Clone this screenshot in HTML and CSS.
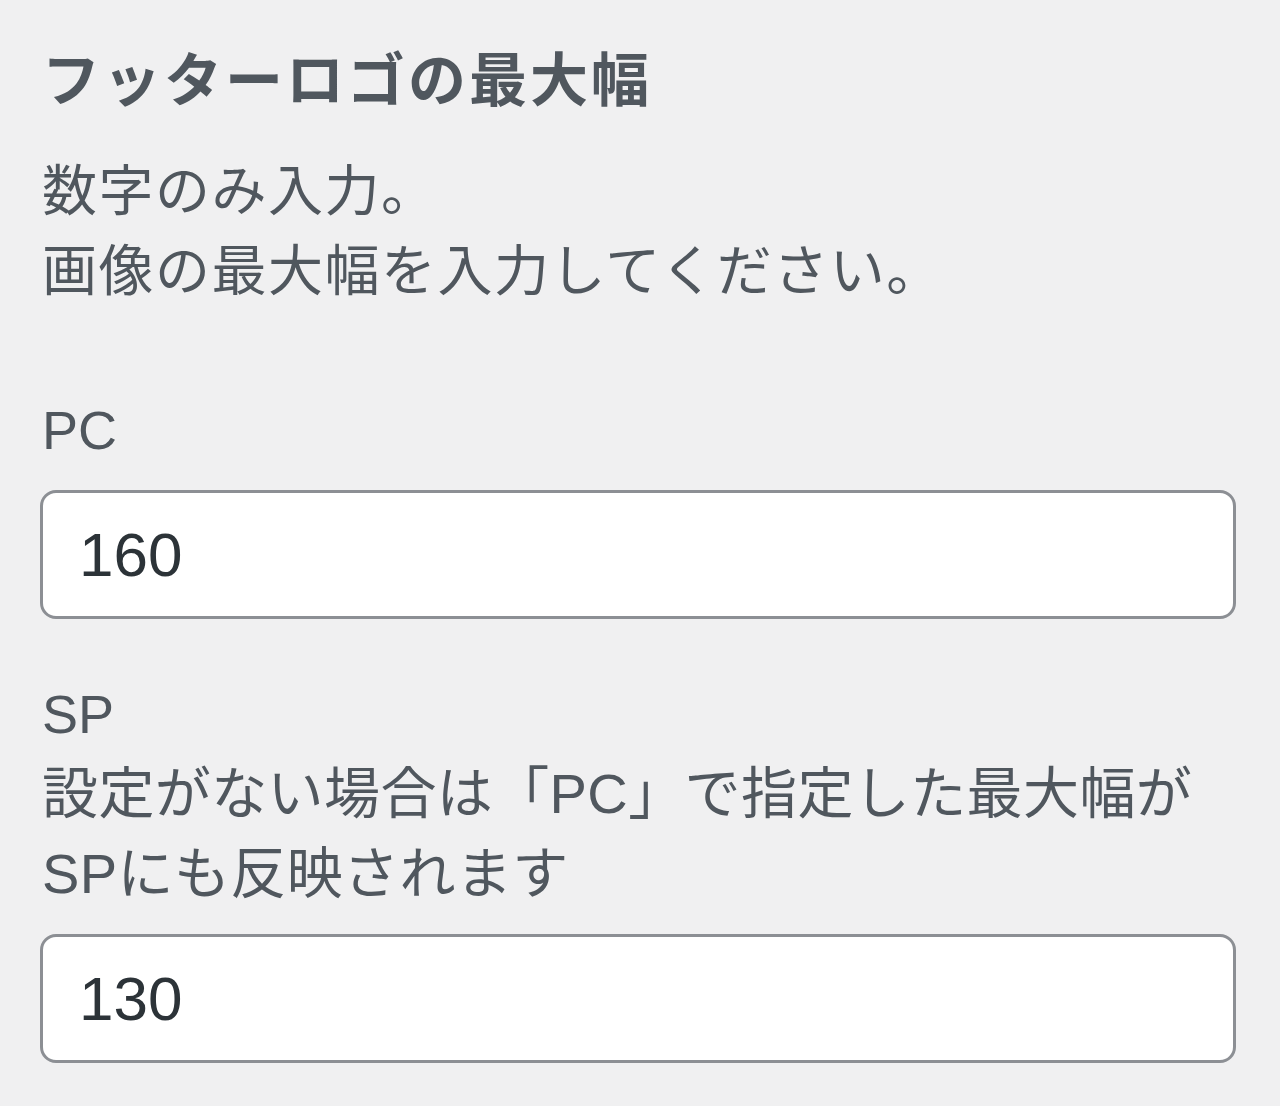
FILE: index.html
```html
<!DOCTYPE html>
<html lang="ja">
<head>
  <meta charset="utf-8">
  <title>フッターロゴの最大幅</title>
  <link rel="stylesheet" href="styles.css">
</head>
<body>
  <div class="control">
    <h2 class="control-title">フッターロゴの最大幅</h2>
    <p class="control-desc">数字のみ入力。<br>画像の最大幅を入力してください。</p>

    <label class="field">
      <span class="field-label">PC</span>
      <input class="field-input" type="text" value="160">
    </label>

    <label class="field field-sp">
      <span class="field-label">SP</span>
      <span class="field-note">設定がない場合は「PC」で指定した最大幅が<br>SPにも反映されます</span>
      <input class="field-input" type="text" value="130">
    </label>
  </div>
</body>
</html>
```

FILE: styles.css
```css
body {
  margin: 0;
  background: #f0f0f1;
  color: #50575e;
  font-family: "Liberation Sans", "Noto Sans CJK JP", sans-serif;
}

.control {
  padding: 41px 44px 40px 42px;
}

.control-title {
  margin: 0;
  font-size: 58px;
  font-weight: 700;
  line-height: 80px;
  letter-spacing: 3px;
}

.control-desc {
  margin: 30px 0 0;
  font-size: 55px;
  line-height: 80px;
  letter-spacing: 1.5px;
}

.field {
  display: flex;
  flex-direction: column;
  margin-top: 79px;
}

.field-sp {
  margin-top: 55px;
}

.field-label {
  font-size: 54px;
  line-height: 80px;
}

.field-note {
  font-size: 56px;
  line-height: 80px;
  letter-spacing: 0.4px;
}

.field-input {
  box-sizing: border-box;
  margin: 20px 0 0 -2px;
  height: 129px;
  padding: 0 36px;
  border: 3px solid #8c8f94;
  border-radius: 16px;
  background: #fff;
  color: #2c3338;
  font-family: "Liberation Sans", sans-serif;
  font-size: 62px;
}
```
